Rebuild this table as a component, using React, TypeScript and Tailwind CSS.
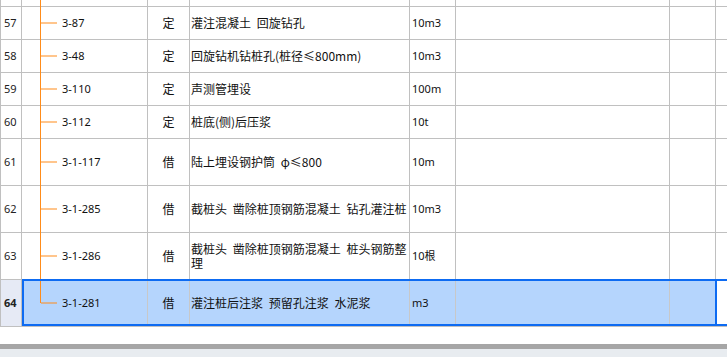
import React from "react";

type Row = {
  n: string;
  code: string;
  kind: string;
  name: string;
  unit: string;
  h: string;
  last?: boolean;
};

const rows: Row[] = [
  { n: "57", code: "3-87", kind: "定", name: "灌注混凝土 回旋钻孔", unit: "10m3", h: "h-[33px]" },
  { n: "58", code: "3-48", kind: "定", name: "回旋钻机钻桩孔(桩径≤800mm)", unit: "10m3", h: "h-[33px]" },
  { n: "59", code: "3-110", kind: "定", name: "声测管埋设", unit: "100m", h: "h-[33px]" },
  { n: "60", code: "3-112", kind: "定", name: "桩底(侧)后压浆", unit: "10t", h: "h-[33px]" },
  { n: "61", code: "3-1-117", kind: "借", name: "陆上埋设钢护筒 φ≤800", unit: "10m", h: "h-[47px]" },
  { n: "62", code: "3-1-285", kind: "借", name: "截桩头 凿除桩顶钢筋混凝土 钻孔灌注桩", unit: "10m3", h: "h-[47px]" },
  { n: "63", code: "3-1-286", kind: "借", name: "截桩头 凿除桩顶钢筋混凝土 桩头钢筋整理", unit: "10根", h: "h-[47px]" },
  { n: "64", code: "3-1-281", kind: "借", name: "灌注桩后注浆 预留孔注浆 水泥浆", unit: "m3", h: "h-[47px]", last: true },
];

const small = "font-['Noto_Sans','Noto_Sans_CJK_SC',sans-serif] text-[11px]";
const cjk = "font-['Noto_Sans_CJK_SC','Noto_Sans',sans-serif] text-[12px]";

function TreeLink({ end }: { end?: boolean }) {
  return (
    <>
      <span
        className={`absolute left-[18px] w-px bg-[#ff8c1a] top-0 ${end ? "h-1/2" : "-bottom-px"}`}
      />
      <span className="absolute left-[19px] top-1/2 h-px w-[16px] -translate-y-1/2 bg-[#ff8c1a]" />
    </>
  );
}

function DataRow({ r }: { r: Row }) {
  const sel = r.last;
  const fill = sel ? "bg-[#b5d5fd]" : "bg-white";
  const line = sel ? "border-[#c8c8c8]" : "border-[#c0c0c0]";
  return (
    <div className={`relative flex ${r.h} border-b border-[#c0c0c0]`}>
      <div
        className={`flex w-[21px] shrink-0 items-center border-r border-[#c0c0c0] pl-[3px] ${small} text-[#222] ${
          sel ? "bg-[#e6eaf5] font-bold text-[#111]" : ""
        }`}
      >
        {r.n}
      </div>
      <div className={`relative flex w-[126px] shrink-0 items-center border-r ${line} ${fill} pl-[40px] ${small} text-[#111]`}>
        <TreeLink end={sel} />
        {r.code}
      </div>
      <div className={`flex w-[42px] shrink-0 items-center justify-center border-r ${line} ${fill} ${cjk} text-[#111]`}>
        {r.kind}
      </div>
      <div
        className={`flex w-[220px] shrink-0 items-center border-r ${line} ${fill} pl-[1px] ${cjk} leading-[14px] text-[#111] [word-spacing:3px]`}
      >
        {r.name}
      </div>
      <div className={`flex w-[46px] shrink-0 items-center border-r ${line} ${fill} pl-[2px] ${small} text-[#111]`}>
        {r.unit}
      </div>
      <div className={`w-[214px] shrink-0 border-r ${line} ${fill}`} />
      <div className={`w-[46px] shrink-0 border-r ${line} ${fill}`} />
      <div className="flex-1 bg-white" />
      {sel && (
        <>
          <div className="pointer-events-none absolute left-[21px] top-[-1px] h-[47px] w-[695px] border-2 border-[#0d6bf2]" />
          <div className="pointer-events-none absolute left-[716px] right-0 top-[-1px] h-[47px] border-y-2 border-[#0d6bf2]" />
        </>
      )}
    </div>
  );
}

export default function App() {
  return (
    <div className="h-[357px] w-[727px] overflow-hidden bg-white">
      <div className="border-l border-[#c0c0c0]">
        {/* tail of the previous row */}
        <div className="flex h-[7px] border-b border-[#c0c0c0]">
          <div className="w-[21px] shrink-0 border-r border-[#c0c0c0]" />
          <div className="relative w-[126px] shrink-0 border-r border-[#c0c0c0]">
            <span className="absolute left-[18px] top-0 -bottom-px w-px bg-[#ff8c1a]" />
          </div>
          <div className="w-[42px] shrink-0 border-r border-[#c0c0c0]" />
          <div className="w-[220px] shrink-0 border-r border-[#c0c0c0]" />
          <div className="w-[46px] shrink-0 border-r border-[#c0c0c0]" />
          <div className="w-[214px] shrink-0 border-r border-[#c0c0c0]" />
          <div className="w-[46px] shrink-0 border-r border-[#c0c0c0]" />
          <div className="flex-1" />
        </div>
        {rows.map((r) => (
          <DataRow key={r.n} r={r} />
        ))}
      </div>
      <div className="h-[17px] bg-white" />
      <div className="h-[5px] bg-[#a6a6a6]" />
      <div className="h-[10px] bg-[#e8ecf0]" />
    </div>
  );
}
